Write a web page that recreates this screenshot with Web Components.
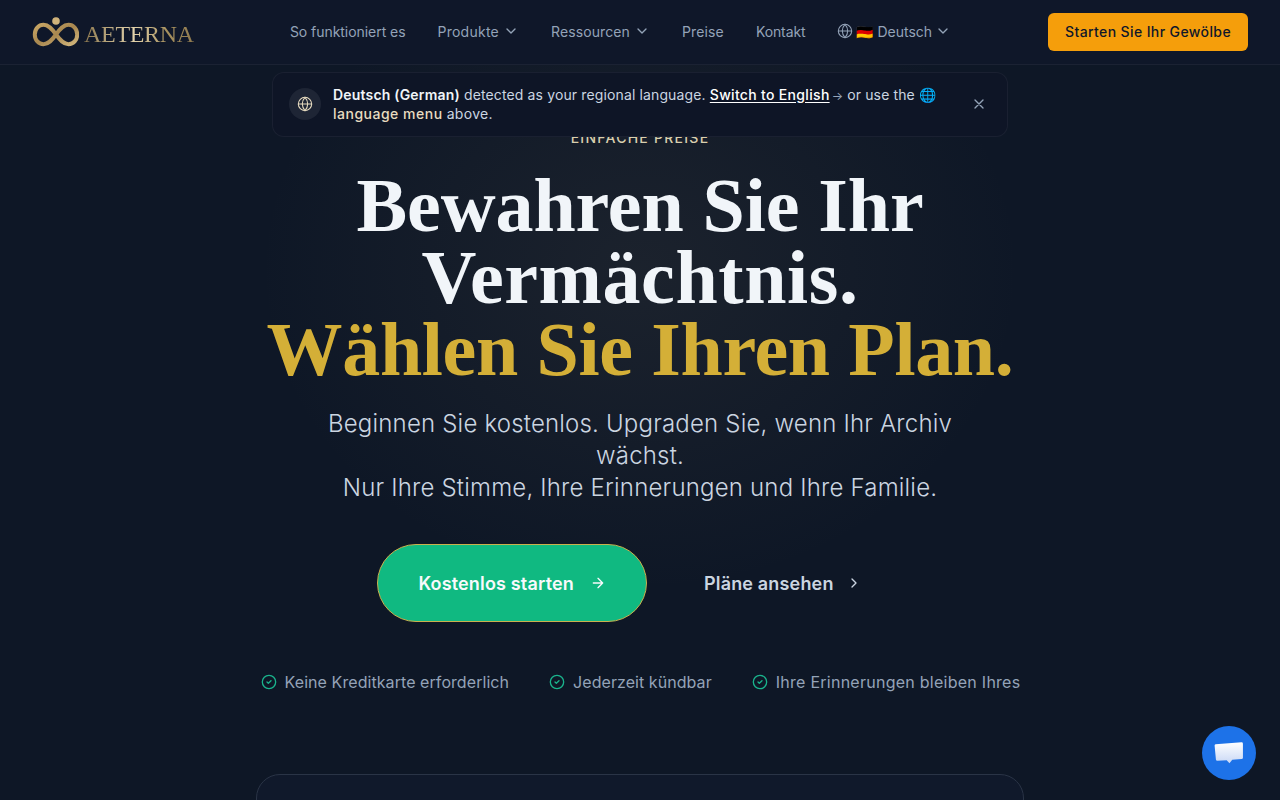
<!DOCTYPE html>
<html lang="de"><head><meta charset="utf-8"><title>Aeterna</title>
<style>
html,body{margin:0;height:800px;overflow:hidden;background:#0e1726}
body{font-family:Inter,"Noto Sans",sans-serif;font-optical-sizing:none}
</style></head><body>
<ae-page>
  <ae-nav></ae-nav>
  <ae-banner></ae-banner>
  <ae-hero></ae-hero>
  <ae-chat></ae-chat>
</ae-page>
<script>
const chev='<svg width="16" height="16" viewBox="0 0 24 24" fill="none" stroke="currentColor" stroke-width="2" stroke-linecap="round" stroke-linejoin="round"><path d="m6 9 6 6 6-6"/></svg>';
const globe=(s,c='currentColor')=>`<svg width="${s}" height="${s}" viewBox="0 0 24 24" fill="none" stroke="${c}" stroke-width="1.6" stroke-linecap="round" stroke-linejoin="round"><circle cx="12" cy="12" r="10"/><path d="M12 2a14.5 14.5 0 0 0 0 20 14.5 14.5 0 0 0 0-20"/><path d="M2 12h20"/></svg>`;
function def(name,css,html){customElements.define(name,class extends HTMLElement{constructor(){super();const r=this.attachShadow({mode:'open'});r.innerHTML=`<style>${css}</style>${html}`}})}

def('ae-page',`:host{display:block;position:relative;width:1280px;height:800px;overflow:hidden;color:#fff;
background:radial-gradient(ellipse 380px 320px at 640px 270px,rgba(125,115,95,.12),transparent 100%),#0e1726}`,`<slot></slot>`);

def('ae-nav',`:host{display:flex;align-items:center;justify-content:space-between;height:64px;padding:0 32px;border-bottom:1px solid rgba(255,255,255,.05);background:#0f1729;position:relative}
.logo{display:flex;align-items:center;gap:5px;width:161px;flex:none}
.logo svg{flex:none;display:block}
.word{font:400 24px/1 "Liberation Serif",serif;letter-spacing:-.3px;background:linear-gradient(90deg,#8f7a4f,#e3d3ac 45%,#a8925f 75%,#8f7a4f);-webkit-background-clip:text;background-clip:text;color:transparent;margin-top:4px}
.links{display:flex;gap:32px;align-items:center;font-size:14px;color:#94a3b8;padding-bottom:2px}
.i{display:flex;align-items:center;gap:4px;white-space:nowrap}
.i svg{display:block}
.lang{gap:3px}
.cta{background:#f59e0b;color:#0f172a;font-size:14px;font-weight:500;letter-spacing:.39px;height:38px;width:200px;box-sizing:border-box;justify-content:center;display:flex;align-items:center;border-radius:6px;white-space:nowrap;padding-bottom:1px}`,
`<div class="logo"><svg width="47" height="30" viewBox="0 0 47 30"><defs><linearGradient id="g" x1="0" x2="1" y1="0" y2="1"><stop offset="0" stop-color="#c9a765"/><stop offset=".5" stop-color="#a8874f"/><stop offset="1" stop-color="#d2b67c"/></linearGradient></defs><g transform="translate(1 0)"><path d="M23 17.500C19 12 15.500 7.800 10.500 7.800 5.500 7.800 1.800 12 1.800 17.500S5.500 27.200 10.500 27.200C15.500 27.200 19 23 23 17.500 27 12 30.500 7.800 35.500 7.800 40.500 7.800 44.200 12 44.200 17.500S40.500 27.200 35.500 27.200C30.500 27.200 27 23 23 17.500Z" fill="none" stroke="url(#g)" stroke-width="4"/><circle cx="23" cy="4" r="3.800" fill="#cfb27a"/></g></svg><span class="word">AETERNA</span></div>
<div class="links"><span class="i" style="letter-spacing:-.05px">So funktioniert es</span><span class="i"><span style="letter-spacing:.25px">Produkte</span> ${chev}</span><span class="i"><span style="letter-spacing:.1px">Ressourcen</span> ${chev}</span><span class="i" style="letter-spacing:.15px">Preise</span><span class="i" style="letter-spacing:-.1px">Kontakt</span><span class="i lang">${globe(16)}<span>🇩🇪 Deutsch</span> ${chev}</span></div>
<div class="cta">Starten Sie Ihr Gewölbe</div>`);

def('ae-banner',`:host{position:absolute;left:272px;top:72px;width:736px;height:65px;box-sizing:border-box;display:flex;align-items:center;gap:12px;padding:0 16px 2px;border:1px solid rgba(255,255,255,.05);border-radius:12px;background:#0e1526;font-size:14px;line-height:19px;color:#cbd5e1;z-index:2}
.ic{flex:none;width:32px;height:32px;border-radius:50%;background:#1e2535;display:flex;align-items:center;justify-content:center;color:#e8dcc0}
.t{flex:1;min-width:0;letter-spacing:.13px}
b{font-weight:600;color:#f1f5f9;letter-spacing:.19px}
a{color:#fff;font-weight:500;text-decoration:underline;text-underline-offset:2px;letter-spacing:.32px}
.g{color:#e8dcc0;font-weight:500;letter-spacing:.5px}
.ar{color:#94a3b8;font-size:12px;line-height:0;margin-left:-2px;letter-spacing:0}
.em{line-height:0;letter-spacing:0}
.ab{letter-spacing:.3px}
.x{flex:none;width:20px;display:flex;justify-content:center;color:#94a3b8;margin-right:2px}`,
`<div class="ic">${globe(16)}</div><div class="t"><b>Deutsch (German)</b> detected as your regional language. <a>Switch to English</a> <span class="ar">→</span> or use the <span class="em">🌐</span> <span class="g">language menu</span> <span class="ab">above.</span></div><div class="x"><svg width="16" height="16" viewBox="0 0 24 24" fill="none" stroke="currentColor" stroke-width="2" stroke-linecap="round"><path d="M18 6 6 18M6 6l12 12"/></svg></div>`);

def('ae-hero',`:host{display:flex;flex-direction:column;align-items:center;padding-top:63px;text-align:center}
.eb{font-size:14px;line-height:20px;letter-spacing:1.25px;color:#d9cfae;font-weight:500}
h1{margin:21px 0 0;font:700 76px/72px "Liberation Serif",serif;color:#f1f5f9;letter-spacing:-.1px}
h1 span{display:block}
h1 .l2{letter-spacing:.6px}
h1 .l3{color:#d4af37;letter-spacing:-.35px}
p{margin:23px 0 0;width:672px;font-size:24px;line-height:32px;font-weight:330;color:#cbd5e1;letter-spacing:.19px}
.btns{display:flex;align-items:center;gap:32px;margin-top:40px}
.trust{display:flex;gap:40px;margin:48px 0 0 1px;font-size:16px;line-height:24px;color:#94a3b8}
.card{margin-top:80px;width:768px;height:200px;box-sizing:border-box;border:1px solid #2a3446;border-radius:24px;background:#10192b;flex:none}`,
`<div class="eb">EINFACHE PREISE</div>
<h1><span>Bewahren Sie Ihr</span><span class="l2">Vermächtnis.</span><span class="l3">Wählen Sie Ihren Plan.</span></h1>
<p>Beginnen Sie kostenlos. Upgraden Sie, wenn Ihr Archiv wächst.<br>Nur Ihre Stimme, Ihre Erinnerungen und Ihre Familie.</p>
<div class="btns"><ae-btn primary>Kostenlos starten</ae-btn><ae-btn>Pläne ansehen</ae-btn></div>
<div class="trust"><ae-check style="letter-spacing:.07px">Keine Kreditkarte erforderlich</ae-check><ae-check style="letter-spacing:.06px">Jederzeit kündbar</ae-check><ae-check style="letter-spacing:.26px">Ihre Erinnerungen bleiben Ihres</ae-check></div>
<div class="card"></div>`);

customElements.define('ae-btn',class extends HTMLElement{constructor(){super();const p=this.hasAttribute('primary');const r=this.attachShadow({mode:'open'});
r.innerHTML=`<style>:host{display:flex;align-items:center;height:78px;box-sizing:border-box;font-size:18px;font-weight:600;white-space:nowrap;letter-spacing:.17px}
:host([primary]){gap:16px;background:#10b981;border:1px solid #c9b14d;border-radius:39px;padding:0 40px;color:#f8fafc}
:host(:not([primary])){gap:12px;color:#cbd5e1;padding:0 41px 0 25px}svg{display:block}</style><slot></slot>${p?'<svg width="16" height="16" viewBox="0 0 24 24" fill="none" stroke="currentColor" stroke-width="2" stroke-linecap="round" stroke-linejoin="round"><path d="M5 12h14M12 5l7 7-7 7"/></svg>':'<svg width="16" height="16" viewBox="0 0 24 24" fill="none" stroke="currentColor" stroke-width="2" stroke-linecap="round" stroke-linejoin="round"><path d="m9 18 6-6-6-6"/></svg>'}`}});

def('ae-check',`:host{display:flex;align-items:center;gap:8px;white-space:nowrap}svg{display:block;flex:none}`,
`<svg width="16" height="16" viewBox="0 0 24 24" fill="none" stroke="#1ab38c" stroke-width="2" stroke-linecap="round" stroke-linejoin="round"><circle cx="12" cy="12" r="10"/><path d="m9 12 2 2 4-4"/></svg><slot></slot>`);

def('ae-chat',`:host{position:absolute;left:1202px;top:726px;width:54px;height:54px;border-radius:50%;background:#1d72e8;display:flex;align-items:center;justify-content:center;z-index:3}`,
`<svg width="32" height="26" viewBox="0 0 34 28"><defs><linearGradient id="b" x1="0" y1="0" x2="0" y2="1"><stop offset="0" stop-color="#fff"/><stop offset="1" stop-color="#c9d8f5"/></linearGradient></defs><path d="M2.500 4.500 30.500 2.500Q32 2.500 32 4V19Q32 20.300 30.500 20.500L20.500 21.200 17.500 25 14.500 21.800 4.500 22.300Q3 22.300 2.900 21L1.500 6Q1.500 4.700 2.500 4.500Z" fill="url(#b)"/></svg>`);
</script>
</body></html>
